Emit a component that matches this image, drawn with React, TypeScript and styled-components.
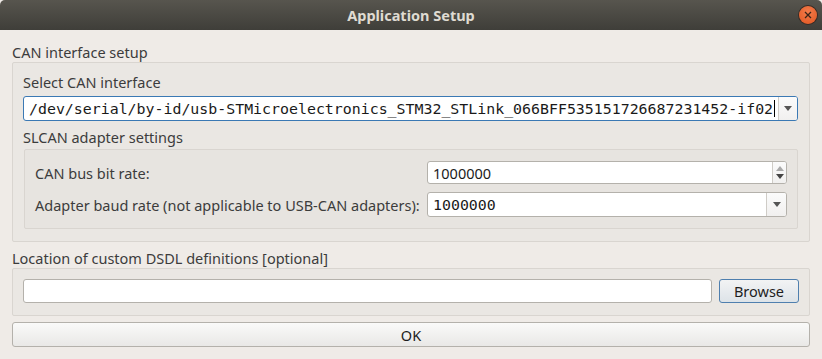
import React from 'react'
import styled, { createGlobalStyle } from 'styled-components'

const GlobalStyle = createGlobalStyle`
  html, body {
    margin: 0;
    padding: 0;
    background: #efebe7;
  }
  * {
    box-sizing: border-box;
  }
`

const Window = styled.div`
  width: 822px;
  height: 359px;
  display: flex;
  flex-direction: column;
  background: #efebe7;
  font-family: "Noto Sans", "DejaVu Sans", sans-serif;
  font-size: 14.5px;
  color: #3c3c3c;
  overflow: hidden;
`

const TitleBar = styled.div`
  height: 30px;
  flex: none;
  display: flex;
  align-items: center;
  justify-content: center;
  position: relative;
  background: linear-gradient(#57554e, #3f3e39);
  border-radius: 5px 5px 0 0;
  color: #dfdbd2;
  font-weight: bold;
  font-size: 14.5px;
`

const CloseButton = styled.div`
  position: absolute;
  right: 5px;
  top: 6px;
  width: 18px;
  height: 18px;
  border-radius: 50%;
  background: radial-gradient(circle at 50% 35%, #f47d4c, #e0541f);
  box-shadow: 0 0 0 1px #3a2b24;
  display: flex;
  align-items: center;
  justify-content: center;
`

const Body = styled.div`
  flex: 1;
  display: flex;
  flex-direction: column;
  padding: 12px 12px 0 12px;
`

const SectionLabel = styled.div<{ $mt?: number }>`
  height: 20px;
  line-height: 20px;
  margin-top: ${(p) => p.$mt ?? 0}px;
  white-space: nowrap;
`

const GroupBox = styled.div<{ $tone?: string }>`
  border: 1px solid #d9d5d0;
  border-radius: 2px;
  background: ${(p) => p.$tone ?? '#eae7e3'};
`

const OuterGroup = styled(GroupBox)`
  display: flex;
  flex-direction: column;
  padding: 9px 11px 12px 10px;
`

const InnerGroup = styled(GroupBox)`
  margin-top: 2px;
  margin-left: 1px;
  display: grid;
  grid-template-columns: 392px 1fr;
  row-gap: 8px;
  align-items: center;
  padding: 11px 10px 11px 10px;
`

const FileGroup = styled(GroupBox)`
  display: flex;
  gap: 7px;
  padding: 10px 10px 12px 10px;
`

const Field = styled.div<{ $h: number; $focus?: boolean }>`
  height: ${(p) => p.$h}px;
  display: flex;
  align-items: stretch;
  background: #ffffff;
  border: 1px solid ${(p) => (p.$focus ? '#3b79b4' : '#b4b1ab')};
  border-radius: 3px;
  overflow: hidden;
`

const FieldText = styled.div<{ $mono?: boolean }>`
  flex: 1;
  display: flex;
  align-items: center;
  padding-left: 5px;
  white-space: nowrap;
  overflow: hidden;
  color: #1a1a1a;
  font-family: ${(p) => (p.$mono ? '"DejaVu Sans Mono", monospace' : '"Noto Sans", sans-serif')};
  font-size: ${(p) => (p.$mono ? '14.9px' : '14.5px')};
`

const Caret = styled.span`
  display: inline-block;
  width: 1px;
  height: 17px;
  background: #000;
  margin-left: 1px;
`

const DropButton = styled.div<{ $w: number }>`
  width: ${(p) => p.$w}px;
  flex: none;
  border-left: 1px solid #cfccc7;
  background: linear-gradient(#fbfbfb, #f1f0ef);
  display: flex;
  align-items: center;
  justify-content: center;
`

const SpinButtons = styled.div`
  width: 14px;
  flex: none;
  border-left: 1px solid #cfccc7;
  background: linear-gradient(#fbfbfb, #f1f0ef);
  display: flex;
  flex-direction: column;
  align-items: center;
  justify-content: center;
  gap: 3px;
`

const RowLabel = styled.div`
  white-space: nowrap;
  line-height: 20px;
`

const Button = styled.div<{ $primary?: boolean }>`
  height: 24px;
  display: flex;
  align-items: center;
  justify-content: center;
  border: 1px solid ${(p) => (p.$primary ? '#4f7fae' : '#b4b1ab')};
  border-radius: 3px;
  background: ${(p) =>
    p.$primary ? 'linear-gradient(#f2f3f4, #dde3e8)' : 'linear-gradient(#fafaf9, #e9e8e6)'};
  color: #1e1e1e;
`

const BrowseButton = styled(Button)`
  width: 80px;
  flex: none;
`

const OkButton = styled(Button)`
  height: 25px;
  margin-top: 6px;
`

const Arrow = ({ up, color }: { up?: boolean; color: string }) => (
  <svg width="8" height="5" viewBox="0 0 8 5">
    <path d={up ? 'M0 5 L4 0 L8 5 Z' : 'M0 0 L8 0 L4 5 Z'} fill={color} />
  </svg>
)

const App = () => {
  return (
    <>
      <GlobalStyle />
      <Window>
        <TitleBar>
          Application Setup
          <CloseButton>
            <svg width="8" height="8" viewBox="0 0 8 8">
              <path d="M1 1 L7 7 M7 1 L1 7" stroke="#3b2418" strokeWidth="1.3" />
            </svg>
          </CloseButton>
        </TitleBar>
        <Body>
          <SectionLabel>CAN interface setup</SectionLabel>
          <OuterGroup>
            <SectionLabel>Select CAN interface</SectionLabel>
            <Field $h={25} $focus style={{ marginTop: 4 }}>
              <FieldText $mono>
                /dev/serial/by-id/usb-STMicroelectronics_STM32_STLink_066BFF535151726687231452-if02
                <Caret />
              </FieldText>
              <DropButton $w={19}>
                <Arrow color="#555" />
              </DropButton>
            </Field>
            <SectionLabel $mt={6}>SLCAN adapter settings</SectionLabel>
            <InnerGroup $tone="#e7e4e0">
              <RowLabel>CAN bus bit rate:</RowLabel>
              <Field $h={23}>
                <FieldText>1000000</FieldText>
                <SpinButtons>
                  <Arrow up color="#a9a9a9" />
                  <Arrow color="#444" />
                </SpinButtons>
              </Field>
              <RowLabel>Adapter baud rate (not applicable to USB-CAN adapters):</RowLabel>
              <Field $h={25}>
                <FieldText $mono>1000000</FieldText>
                <DropButton $w={20}>
                  <Arrow color="#555" />
                </DropButton>
              </Field>
            </InnerGroup>
          </OuterGroup>
          <SectionLabel $mt={6}>Location of custom DSDL definitions [optional]</SectionLabel>
          <FileGroup>
            <Field $h={24} style={{ flex: 1 }}>
              <FieldText />
            </Field>
            <BrowseButton $primary>Browse</BrowseButton>
          </FileGroup>
          <OkButton>OK</OkButton>
        </Body>
      </Window>
    </>
  )
}

export default App
